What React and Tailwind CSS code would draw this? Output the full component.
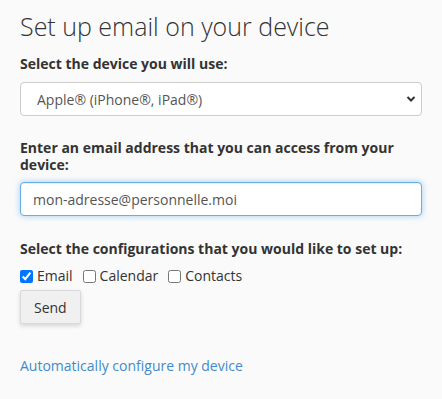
import React, { useState } from 'react';

const App = () => {
  const [checks, setChecks] = useState({ email: true, calendar: false, contacts: false });
  const toggle = (k) => setChecks((c) => ({ ...c, [k]: !c[k] }));

  return (
    <div className="min-h-[399px] w-[442px] bg-[#fafafa] px-5 pt-[8px] text-[#333] font-['Open_Sans',sans-serif]">
      <h1 className="text-[25px] font-light leading-[36px]">Set up email on your device</h1>

      <label className="mt-[10px] block text-[14px] font-bold leading-[20px]">Select the device you will use:</label>
      <div className="relative mt-[8px]">
        <select className="h-[34px] w-full appearance-none rounded-[4px] border border-[#ccc] bg-white pl-[16px] text-[14px] text-[#555] outline-none">
          <option>Apple® (iPhone®, iPad®)</option>
        </select>
        <svg className="pointer-events-none absolute right-[6px] top-[13px]" width="10" height="8" viewBox="0 0 10 8">
          <path d="M1.5 2 L5 5.5 L8.5 2" fill="none" stroke="#333" strokeWidth="2" />
        </svg>
      </div>

      <label className="mt-[23px] block text-[14px] font-bold leading-[17px]">
        Enter an email address that you can access from your device:
      </label>
      <input
        defaultValue="mon-adresse@personnelle.moi"
        className="mt-[9px] block h-[34px] w-full rounded-[4px] border border-[#66afe9] bg-white px-[12px] text-[14px] text-[#555] shadow-[inset_0_1px_1px_rgba(0,0,0,0.075),0_0_6px_rgba(102,175,233,0.6)] outline-none"
      />

      <label className="mt-[23px] block text-[14px] font-bold leading-[20px]">
        Select the configurations that you would like to set up:
      </label>
      <div className="mt-[7px] flex items-center gap-[10px] text-[14px] leading-[20px]">
        <label className="flex items-center gap-[4px]">
          <input type="checkbox" checked={checks.email} onChange={() => toggle('email')} className="m-0 h-[13px] w-[13px]" />
          Email
        </label>
        <label className="flex items-center gap-[4px]">
          <input type="checkbox" checked={checks.calendar} onChange={() => toggle('calendar')} className="m-0 h-[13px] w-[13px]" />
          Calendar
        </label>
        <label className="flex items-center gap-[4px]">
          <input type="checkbox" checked={checks.contacts} onChange={() => toggle('contacts')} className="m-0 h-[13px] w-[13px]" />
          Contacts
        </label>
      </div>
      <button className="mt-[4px] h-[34px] rounded-[2px] border border-[#d9d9d9] bg-[#f0f0f0] px-[13px] text-[14px] text-[#333] shadow-[0_2px_4px_rgba(0,0,0,0.15)]">
        Send
      </button>

      <div className="mt-[29px]">
        <a href="#" className="text-[14px] text-[#428bca]">Automatically configure my device</a>
      </div>
    </div>
  );
};

export default App;
